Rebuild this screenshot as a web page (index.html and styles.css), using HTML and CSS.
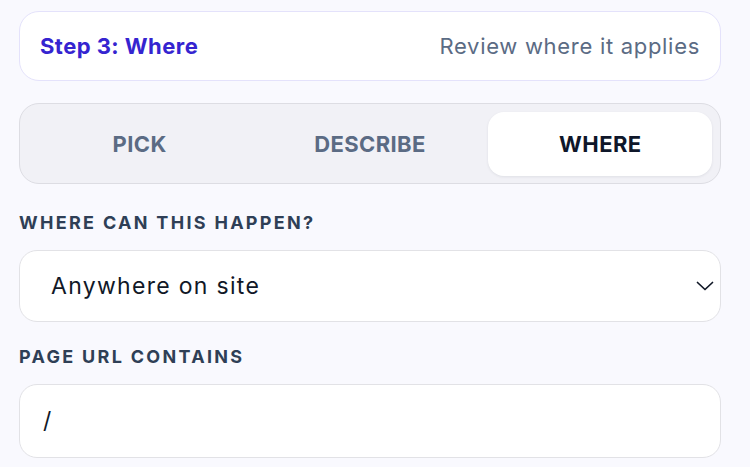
FILE: index.html
```html
<!DOCTYPE html>
<html lang="en">
<head>
<meta charset="utf-8">
<title>Step 3: Where</title>
<link rel="stylesheet" href="styles.css">
</head>
<body>
<main class="panel">
  <header class="step-card">
    <span class="step-title">Step 3: Where</span>
    <span class="step-hint">Review where it applies</span>
  </header>
  <nav class="tabs">
    <button class="tab" type="button">PICK</button>
    <button class="tab" type="button">DESCRIBE</button>
    <button class="tab tab-active" type="button">WHERE</button>
  </nav>
  <section class="field">
    <label class="field-label" for="scope">WHERE CAN THIS HAPPEN?</label>
    <div class="select-wrap">
      <select id="scope" class="control select">
        <option>Anywhere on site</option>
      </select>
      <svg class="chevron" width="18" height="10" viewBox="0 0 18 10" aria-hidden="true"><path d="M1.5 1.5 L9 8.5 L16.5 1.5" fill="none" stroke="#111827" stroke-width="1.7" stroke-linecap="round" stroke-linejoin="round"/></svg>
    </div>
  </section>
  <section class="field">
    <label class="field-label field-label-second" for="url">PAGE URL CONTAINS</label>
    <input id="url" class="control input" type="text" value="/">
  </section>
</main>
</body>
</html>
```

FILE: styles.css
```css
* { box-sizing: border-box; }
html, body { margin: 0; padding: 0; }
body {
  background: #f9f9fe;
  font-family: Inter, "Noto Sans", sans-serif;
  width: 750px;
  height: 467px;
  overflow: hidden;
}
.panel {
  padding: 11px 29px 0 19px;
  display: flex;
  flex-direction: column;
}
.step-card {
  height: 70px;
  background: #ffffff;
  border: 1.5px solid #e4e2fb;
  border-radius: 20px;
  display: flex;
  align-items: center;
  justify-content: space-between;
  padding: 0 20px 0 20px;
}
.step-title {
  font-weight: 700;
  font-size: 22px;
  color: #3524d0;
  letter-spacing: 0.45px;
}
.step-hint {
  font-size: 22px;
  color: #5b6b84;
  letter-spacing: 0.7px;
}
.tabs {
  margin-top: 22px;
  height: 81px;
  background: #f1f1f6;
  border: 1.5px solid #dddde3;
  border-radius: 20px;
  padding: 7.5px;
  display: grid;
  grid-template-columns: 1fr 1fr 1fr;
  gap: 6px;
}
.tab {
  border: 0;
  background: transparent;
  font-family: inherit;
  font-size: 22px;
  font-weight: 700;
  letter-spacing: 0.4px;
  color: #5b6b84;
  border-radius: 16px;
  cursor: pointer;
}
.tab-active {
  background: #ffffff;
  color: #0f172a;
  box-shadow: 0 1px 3px rgba(15, 23, 42, 0.08);
}
.field {
  display: flex;
  flex-direction: column;
}
.field-label {
  margin-top: 27.5px;
  font-size: 18px;
  font-weight: 700;
  letter-spacing: 2.3px;
  color: #2f3f56;
  line-height: 22px;
}
.field-label-second { margin-top: 23.5px; }
.select-wrap {
  position: relative;
  margin-top: 16.5px;
}
.control {
  width: 100%;
  background: #ffffff;
  border: 1.5px solid #e2e2e6;
  border-radius: 18px;
  font-family: inherit;
  color: #111827;
  outline: none;
}
.select {
  height: 72px;
  appearance: none;
  -webkit-appearance: none;
  font-size: 23px;
  letter-spacing: 1.3px;
  padding: 0 50px 0 31px;
}
.chevron {
  position: absolute;
  right: 7px;
  top: 31px;
}
.input {
  margin-top: 16.5px;
  height: 74px;
  font-size: 23px;
  padding: 0 23px;
}
```
